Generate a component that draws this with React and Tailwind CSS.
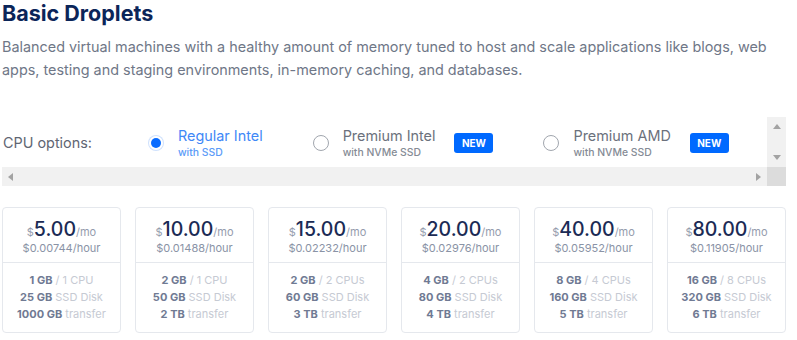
import React, { useState } from 'react';

const plans = [
  { price: '5.00', hour: '$0.00744/hour', mem: '1 GB', cpu: '1 CPU', disk: '25 GB', transfer: '1000 GB' },
  { price: '10.00', hour: '$0.01488/hour', mem: '2 GB', cpu: '1 CPU', disk: '50 GB', transfer: '2 TB' },
  { price: '15.00', hour: '$0.02232/hour', mem: '2 GB', cpu: '2 CPUs', disk: '60 GB', transfer: '3 TB' },
  { price: '20.00', hour: '$0.02976/hour', mem: '4 GB', cpu: '2 CPUs', disk: '80 GB', transfer: '4 TB' },
  { price: '40.00', hour: '$0.05952/hour', mem: '8 GB', cpu: '4 CPUs', disk: '160 GB', transfer: '5 TB' },
  { price: '80.00', hour: '$0.11905/hour', mem: '16 GB', cpu: '8 CPUs', disk: '320 GB', transfer: '6 TB' },
];

const cpuOptions = [
  { id: 'regular', name: 'Regular Intel', sub: 'with SSD', isNew: false },
  { id: 'premium-intel', name: 'Premium Intel', sub: 'with NVMe SSD', isNew: true },
  { id: 'premium-amd', name: 'Premium AMD', sub: 'with NVMe SSD', isNew: true },
];

const Radio = ({ checked }) =>
  checked ? (
    <span className="flex h-[16px] w-[16px] shrink-0 items-center justify-center rounded-full bg-[#cfe1fd]">
      <span className="flex h-[14px] w-[14px] items-center justify-center rounded-full bg-white">
        <span className="h-[10px] w-[10px] rounded-full bg-[#0a6cff]" />
      </span>
    </span>
  ) : (
    <span className="h-[16px] w-[16px] shrink-0 rounded-full border-[1.5px] border-[#a1a6ae] bg-white" />
  );

const Arrow = ({ dir }) => {
  const pts = {
    up: '0,5 4,0 8,5',
    down: '0,0 8,0 4,5',
    left: '5,0 5,8 0,4',
    right: '0,0 0,8 5,4',
  }[dir];
  const vertical = dir === 'up' || dir === 'down';
  return (
    <svg width={vertical ? 8 : 5} height={vertical ? 5 : 8} viewBox={vertical ? '0 0 8 5' : '0 0 5 8'}>
      <polygon points={pts} fill="#a3a3a3" />
    </svg>
  );
};

export default function App() {
  const [cpu, setCpu] = useState('regular');

  return (
    <div className="h-[340px] w-[797px] overflow-hidden bg-white px-[2px] font-['Inter',sans-serif]">
      <div className="w-[784px]">
        <h1 className="text-[21.5px] font-bold leading-[26px] text-[#0b2559]">Basic Droplets</h1>
        <p className="mt-[9px] text-[14.4px] leading-[23px] text-[#6f7787]">
          Balanced virtual machines with a healthy amount of memory tuned to host and scale applications like blogs, web
          apps, testing and staging environments, in-memory caching, and databases.
        </p>

        {/* cpu options, in a scrolling box */}
        <div className="mt-[36px]">
          <div className="flex h-[50px]">
            <div className="flex flex-1 items-center pt-[2px]">
              <span className="w-[146px] shrink-0 pl-[1px] text-[14.4px] text-[#5f6673]">CPU options:</span>
              <div className="flex items-center gap-[50px]">
                {cpuOptions.map((o) => {
                  const on = cpu === o.id;
                  return (
                    <button key={o.id} onClick={() => setCpu(o.id)} className="flex items-center text-left">
                      <Radio checked={on} />
                      <span className="ml-[14px] flex flex-col">
                        <span className={`text-[14.4px] leading-[19px] ${on ? 'text-[#3f88f7]' : 'text-[#6b717c]'}`}>{o.name}</span>
                        <span className={`mt-[1px] text-[10.4px] font-medium leading-[14px] ${on ? 'text-[#5b9bf8]' : 'text-[#858b95]'}`}>{o.sub}</span>
                      </span>
                      {o.isNew && (
                        <span className="ml-[19px] flex h-[20px] w-[39px] items-center justify-center rounded-[3px] bg-[#0069ff] text-[10px] font-bold text-white">
                          NEW
                        </span>
                      )}
                    </button>
                  );
                })}
              </div>
            </div>
            <div className="flex w-[19px] flex-col items-center justify-between bg-[#f1f1f1] py-[7px]">
              <Arrow dir="up" />
              <Arrow dir="down" />
            </div>
          </div>
          <div className="flex h-[19px]">
            <div className="flex flex-1 items-center justify-between bg-[#f1f1f1] px-[6px]">
              <Arrow dir="left" />
              <Arrow dir="right" />
            </div>
            <div className="w-[19px] bg-[#dcdcdc]" />
          </div>
        </div>

        {/* plan cards */}
        <div className="mt-[21px] grid grid-cols-6 gap-[14px]">
          {plans.map((p) => (
            <div key={p.price} className="h-[126px] rounded-[4px] border border-[#e5e8ed] text-center">
              <div className="h-[55px] border-b border-[#e5e8ed] pt-[11px]">
                <div className="flex items-baseline justify-center leading-[20px]">
                  <span className="text-[11px] text-[#959cad]">$</span>
                  <span className="text-[19.5px] font-medium text-[#1b2b55]">{p.price}</span>
                  <span className="text-[11px] text-[#959cad]">/mo</span>
                </div>
                <div className="text-[11px] leading-[13px] text-[#8a93a6]">{p.hour}</div>
              </div>
              <div className="pt-[9px] text-[11px] leading-[17px]">
                <div>
                  <span className="font-bold text-[#707a93]">{p.mem}</span>
                  <span className="text-[#c6cad3]"> / {p.cpu}</span>
                </div>
                <div>
                  <span className="font-bold text-[#707a93]">{p.disk}</span>
                  <span className="text-[#c6cad3]"> SSD Disk</span>
                </div>
                <div>
                  <span className="font-bold text-[#707a93]">{p.transfer}</span>
                  <span className="text-[#c6cad3]"> transfer</span>
                </div>
              </div>
            </div>
          ))}
        </div>
      </div>
    </div>
  );
}
